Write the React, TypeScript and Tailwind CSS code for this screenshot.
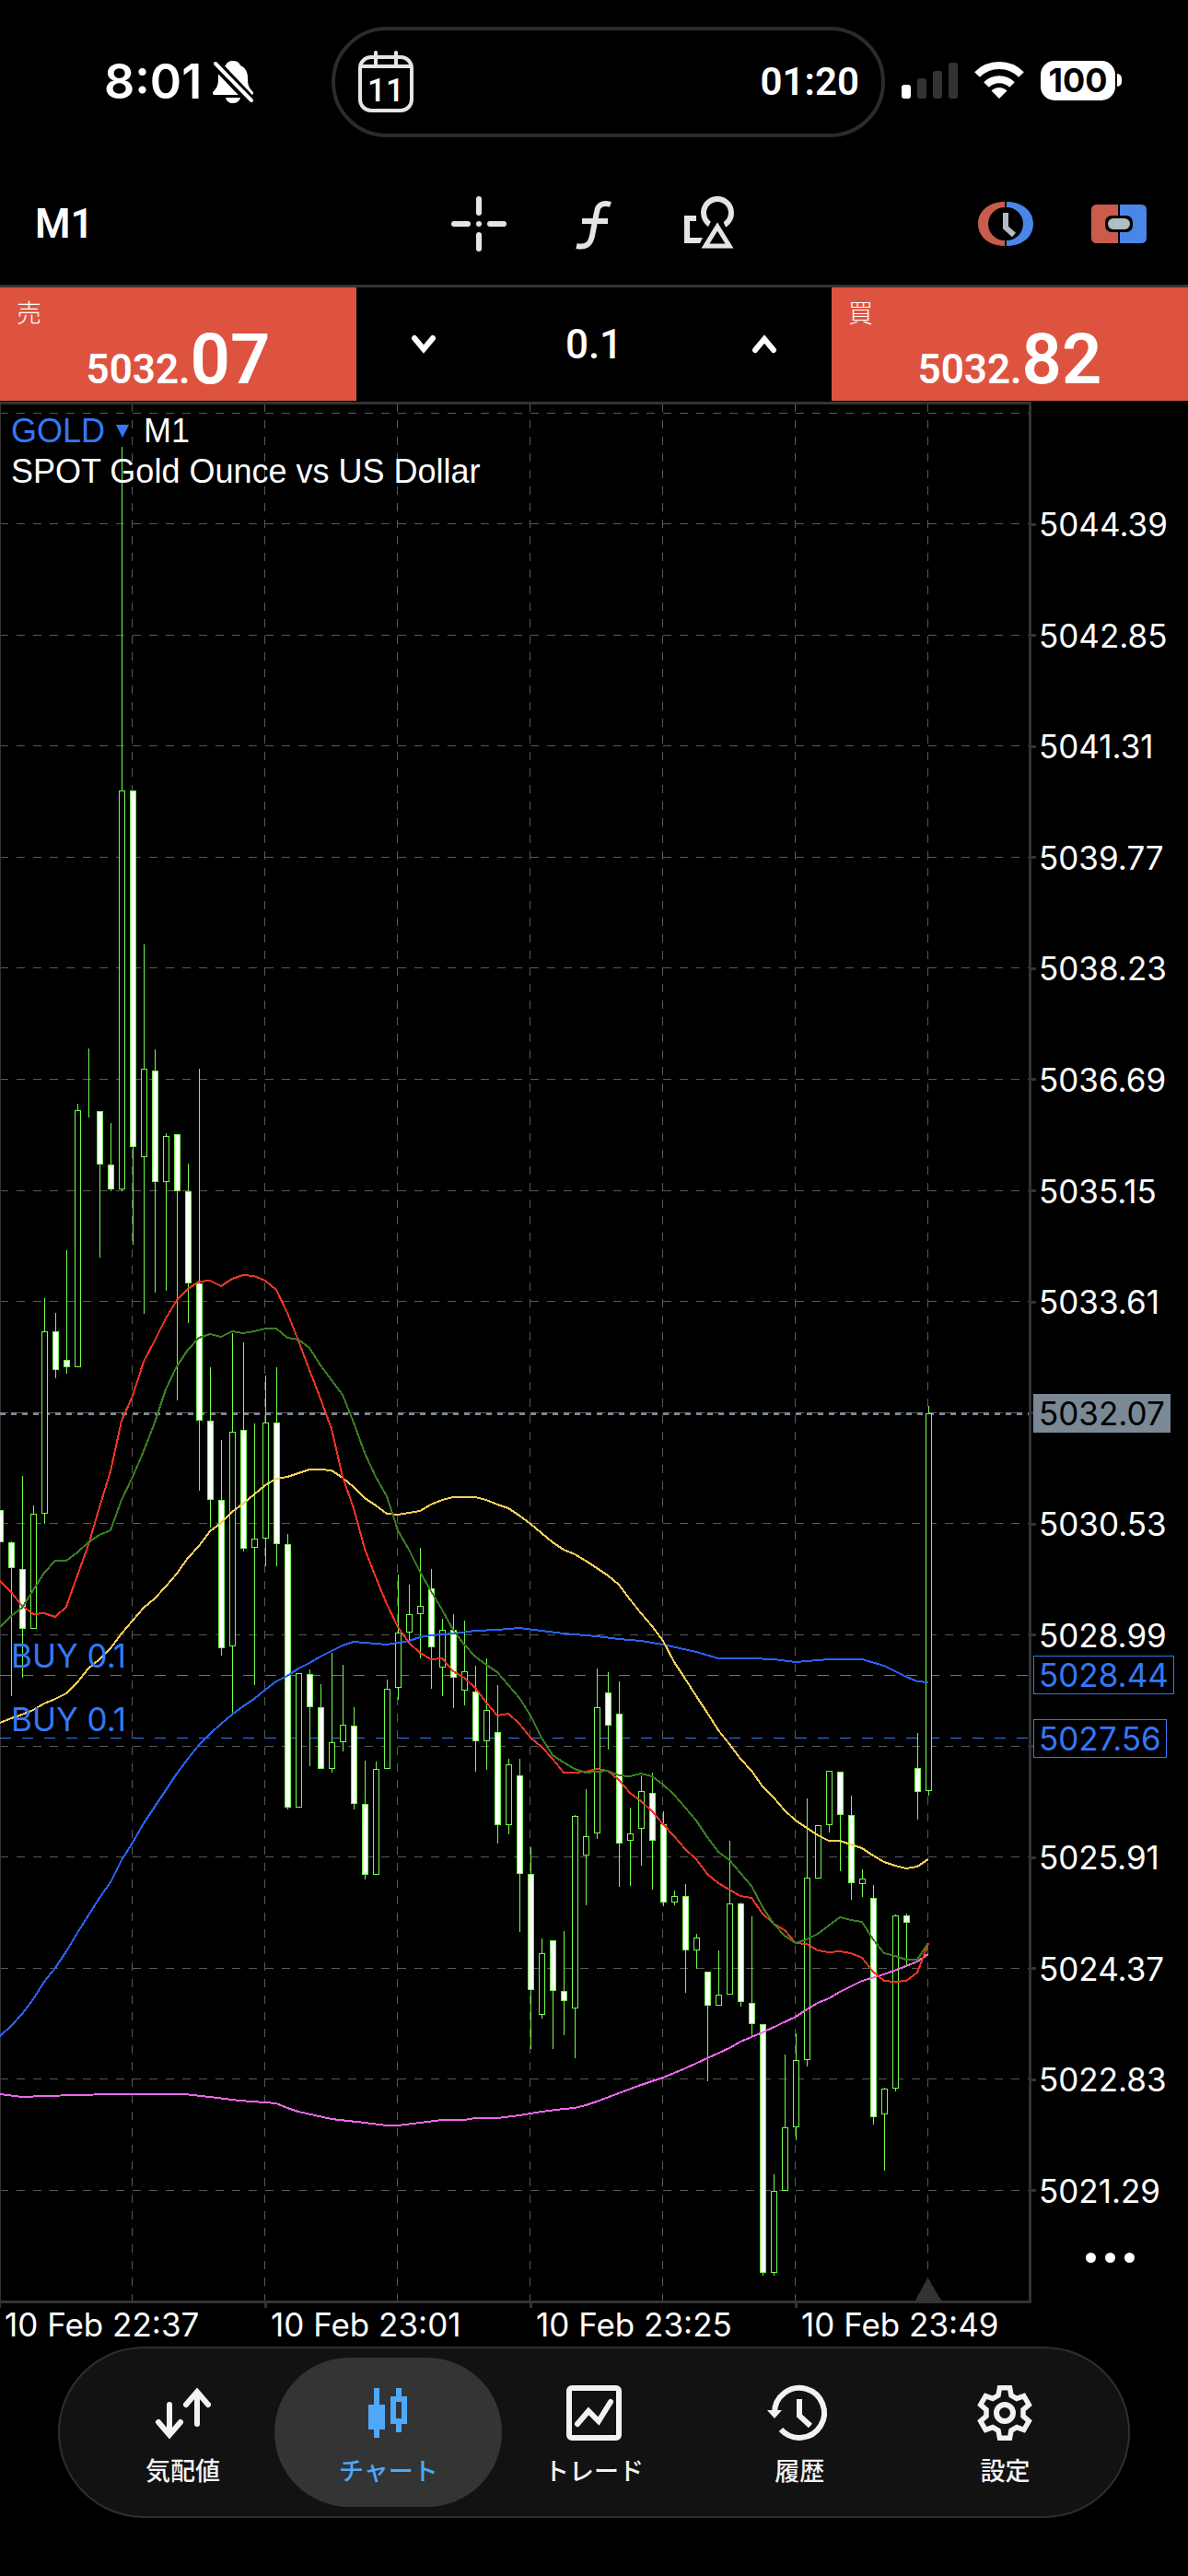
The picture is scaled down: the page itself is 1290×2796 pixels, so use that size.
import React from 'react';

// Chart space: x is 12 units per bar, y runs from TOP to TOP + HEIGHT
const TOP = 436;
const WIDTH = 1120;
const HEIGHT = 2064;

const priceToY = (price: number) => 569 + ((5044.39 - price) * 120.6) / 1.54;
const toPercent = (y: number) => `${((y - TOP) / HEIGHT) * 100}%`;

// [high, body top, body bottom, low, falling]
type Candle = [number, number, number, number, 0 | 1];

const CANDLES: Candle[] = [
  [1639, 1639, 1673, 1673, 1], [1673, 1674, 1701, 1840, 1], [1602, 1703, 1767, 1820, 1], [1634, 1643, 1767, 1767, 0],
  [1409, 1445, 1642, 1653, 0], [1425, 1445, 1486, 1495, 1], [1357, 1476, 1483, 1490, 1], [1198, 1205, 1483, 1483, 0],
  [1138, 1205, 1205, 1212, 0], [1206, 1206, 1263, 1364, 1], [1219, 1264, 1290, 1292, 1], [485, 858, 1290, 1292, 0],
  [858, 858, 1244, 1350, 1], [1025, 1160, 1255, 1425, 0], [1139, 1162, 1282, 1402, 1], [1230, 1233, 1282, 1400, 0],
  [1231, 1231, 1292, 1519, 1], [1263, 1293, 1392, 1435, 1], [1160, 1393, 1541, 1617, 1], [1484, 1542, 1627, 1657, 1],
  [1563, 1628, 1788, 1796, 1], [1447, 1554, 1786, 1858, 0], [1457, 1552, 1680, 1683, 1], [1545, 1670, 1679, 1828, 0],
  [1493, 1544, 1669, 1699, 0], [1484, 1544, 1675, 1699, 1], [1665, 1676, 1961, 1963, 1], [1816, 1816, 1961, 1961, 0],
  [1812, 1817, 1852, 1916, 1], [1828, 1853, 1919, 1919, 1], [1794, 1891, 1919, 1923, 0], [1807, 1872, 1890, 1900, 0],
  [1853, 1873, 1957, 1963, 1], [1911, 1958, 2034, 2039, 1], [1912, 1920, 2034, 2034, 0], [1823, 1833, 1919, 1919, 0],
  [1709, 1772, 1831, 1844, 0], [1720, 1752, 1771, 1779, 0], [1680, 1743, 1751, 1799, 0], [1703, 1724, 1787, 1832, 1],
  [1757, 1769, 1809, 1840, 0], [1752, 1769, 1820, 1853, 1], [1759, 1814, 1834, 1850, 0], [1808, 1836, 1889, 1922, 1],
  [1800, 1856, 1889, 1920, 0], [1829, 1880, 1980, 2000, 1], [1909, 1915, 1980, 1990, 0], [1909, 1927, 2033, 2096, 1],
  [2005, 2034, 2159, 2223, 1], [2104, 2120, 2186, 2190, 0], [2106, 2106, 2160, 2223, 1], [2096, 2161, 2171, 2208, 1],
  [1970, 1971, 2179, 2233, 0], [1942, 1993, 2013, 2067, 0], [1811, 1853, 1989, 1995, 0], [1815, 1837, 1872, 1898, 1],
  [1825, 1860, 2000, 2047, 1], [1962, 1990, 1997, 2046, 0], [1927, 1944, 1984, 2024, 0], [1924, 1946, 1997, 2050, 1],
  [1966, 1980, 2064, 2068, 1], [2052, 2058, 2064, 2067, 0], [2045, 2058, 2116, 2162, 1], [2099, 2103, 2116, 2136, 0],
  [2140, 2140, 2176, 2258, 1], [2117, 2165, 2176, 2176, 0], [1998, 2066, 2164, 2164, 0], [2065, 2066, 2172, 2177, 1],
  [2080, 2174, 2196, 2209, 1], [2197, 2197, 2466, 2469, 1], [2360, 2378, 2466, 2469, 0], [2230, 2309, 2377, 2377, 0],
  [2207, 2236, 2308, 2322, 0], [1952, 2038, 2235, 2242, 0], [1981, 1981, 2038, 2038, 0], [1922, 1922, 1980, 1988, 0],
  [1923, 1923, 1969, 2030, 1], [1949, 1970, 2043, 2061, 1], [2029, 2039, 2044, 2058, 0], [2046, 2060, 2297, 2305, 1],
  [2266, 2267, 2294, 2355, 0], [2078, 2079, 2266, 2269, 0], [2077, 2079, 2086, 2133, 1], [1881, 1919, 1944, 1974, 1],
  [1526, 1534, 1943, 1948, 0],
];

// One value per bar
const FAST_MA = [
  1716, 1728, 1743, 1752, 1751, 1755, 1744, 1710, 1677, 1636, 1597, 1542, 1515, 1478, 1455, 1431, 1411, 1399, 1391, 1390,
  1396, 1388, 1384, 1385, 1390, 1400, 1425, 1455, 1487, 1518, 1551, 1603, 1637, 1681, 1712, 1741, 1766, 1783, 1794, 1801,
  1800, 1814, 1821, 1832, 1848, 1862, 1860, 1871, 1886, 1896, 1909, 1924, 1924, 1923, 1920, 1922, 1932, 1946, 1955, 1966,
  1980, 1993, 2007, 2018, 2034, 2044, 2051, 2058, 2060, 2077, 2088, 2095, 2109, 2110, 2117, 2119, 2118, 2120, 2125, 2140,
  2150, 2151, 2150, 2141, 2110,
];

const MID_MA = [
  1766, 1754, 1745, 1726, 1707, 1694, 1694, 1685, 1674, 1666, 1661, 1628, 1603, 1575, 1544, 1508, 1483, 1465, 1452, 1448,
  1451, 1445, 1447, 1445, 1442, 1442, 1452, 1454, 1463, 1482, 1498, 1514, 1544, 1577, 1603, 1624, 1661, 1682, 1706, 1727,
  1747, 1769, 1785, 1798, 1807, 1815, 1829, 1843, 1862, 1886, 1905, 1913, 1920, 1924, 1923, 1922, 1927, 1928, 1925, 1928,
  1937, 1948, 1962, 1976, 1994, 2010, 2019, 2033, 2047, 2070, 2088, 2101, 2109, 2105, 2099, 2090, 2081, 2084, 2086, 2105,
  2120, 2123, 2127, 2127, 2109,
];

const SLOW_MA = [
  1870, 1865, 1861, 1856, 1849, 1844, 1838, 1826, 1811, 1801, 1789, 1773, 1759, 1745, 1735, 1722, 1708, 1691, 1678, 1662,
  1653, 1641, 1632, 1622, 1612, 1605, 1603, 1599, 1595, 1595, 1596, 1604, 1614, 1626, 1634, 1643, 1644, 1642, 1640, 1633,
  1628, 1625, 1625, 1625, 1628, 1633, 1637, 1645, 1654, 1664, 1674, 1682, 1687, 1694, 1702, 1710, 1720, 1736, 1751, 1765,
  1781, 1804, 1822, 1841, 1859, 1878, 1893, 1909, 1922, 1939, 1951, 1965, 1976, 1984, 1992, 1998, 1998, 2002, 2006, 2014,
  2021, 2025, 2028, 2026, 2018,
];

const barsToPoints = (values: number[]) => values.map((y, i) => `${i * 12},${y}`).join(' ');

// The two longest averages hardly bend, so they are kept as plain points
const BLUE_POINTS =
  '0,2210 12,2199 24,2186 36,2170 48,2151 60,2136 72,2118 84,2098 96,2079 108,2060 120,2043 132,2019 144,2000 156,1979 168,1961 180,1943 192,1925 204,1909 216,1894 228,1882 240,1871 252,1861 264,1852 276,1844 288,1834 300,1825 312,1819 324,1811 336,1805 348,1798 360,1792 372,1786 384,1782 408,1784 420,1785 444,1781 456,1777 468,1775 492,1773 516,1770 540,1769 564,1767 588,1770 612,1773 648,1776 672,1779 696,1781 720,1785 756,1793 780,1800 816,1800 840,1801 864,1804 900,1801 936,1801 960,1808 984,1820 996,1825 1008,1826';
const PINK_POINTS =
  '0,2273 24,2276 48,2275 120,2273 200,2273 228,2276 260,2280 288,2282 300,2283 312,2288 324,2292 360,2300 396,2304 420,2307 432,2307 456,2304 480,2301 504,2301 516,2299 540,2299 564,2296 588,2292 612,2289 624,2288 636,2285 648,2281 672,2272 696,2263 720,2255 744,2245 768,2234 792,2223 804,2216 828,2206 864,2189 876,2181 888,2174 900,2169 912,2162 936,2150 960,2143 984,2134 996,2129 1008,2121';

const GRID_X = [143, 287, 431, 575, 719, 863, 1007];
const GRID_Y = [449, 569, 690, 810, 931, 1051, 1172, 1293, 1413, 1534, 1654, 1775, 1896, 2016, 2137, 2257, 2378];

// null keeps the row free where a price tag sits
const PRICES = [
  '5044.39', '5042.85', '5041.31', '5039.77', '5038.23', '5036.69', '5035.15', '5033.61',
  null, '5030.53', '5028.99', null, '5025.91', '5024.37', '5022.83', '5021.29',
];

const TIMES = ['10 Feb 22:37', '10 Feb 23:01', '10 Feb 23:25', '10 Feb 23:49'];

const POSITIONS = [
  { label: 'BUY 0.1', price: 5028.44 },
  { label: 'BUY 0.1', price: 5027.56 },
];

const BID = 5032.07;

const StatusBar = () => (
  <header className="flex h-[178px] items-center">
    <div className="flex w-[360px] items-center gap-3 pl-[113px]">
      <span className="text-[52px] leading-none font-semibold">8:01</span>
      <svg width="44" height="48" viewBox="0 0 44 48" fill="white" aria-hidden="true">
        <path d="M22 1c-4 0-7 2-8 5-5 2-8 7-8 13 0 8-1 11-5 15-2 2-1 4 2 4h38c3 0 4-2 2-4-4-4-5-7-5-15 0-6-3-11-8-13-1-3-4-5-8-5Z" />
        <path d="M14 41h16c-1 4-4 6-8 6s-7-2-8-6Z" />
        <path d="M2 3 42 45" stroke="black" strokeWidth="11" />
        <path d="M3 4 42 44" stroke="white" strokeWidth="4" strokeLinecap="round" />
      </svg>
    </div>
    <div className="flex h-[120px] flex-1 items-center justify-between rounded-full border-4 border-[#2b2b2b] pr-6 pl-6">
      <svg width="62" height="68" viewBox="0 0 62 68" fill="none" stroke="#e5e5e5" strokeWidth="4" aria-hidden="true">
        <rect x="3" y="7" width="56" height="58" rx="12" />
        <path d="M4 17h54M20 2v15M42 2v15" strokeLinecap="round" />
        <text x="31" y="55" textAnchor="middle" fill="white" stroke="none" fontSize="35" fontFamily="Roboto, sans-serif" fontWeight="500">11</text>
      </svg>
      <span className="font-['Roboto',sans-serif] text-[42px] leading-none font-semibold">01:20</span>
    </div>
    <div className="flex w-[329px] items-center gap-[18px] pb-1 pl-[18px]">
      <svg width="61" height="40" viewBox="0 0 61 40" aria-hidden="true">
        <rect y="25" width="10" height="15" rx="3" fill="white" />
        <rect x="17" y="18" width="10" height="22" rx="3" fill="#333" />
        <rect x="34" y="10" width="10" height="30" rx="3" fill="#333" />
        <rect x="51" y="1" width="10" height="39" rx="3" fill="#333" />
      </svg>
      <svg width="54" height="40" viewBox="0 0 54 40" fill="none" stroke="white" strokeWidth="8" aria-hidden="true">
        <path d="M3 14a34 34 0 0 1 48 0" />
        <path d="M13 25a20 20 0 0 1 28 0" />
        <path d="M27 40 18.500 31.500a12 12 0 0 1 17 0Z" fill="white" stroke="none" />
      </svg>
      <div className="flex items-center gap-[2px]">
        <span className="flex h-[43px] w-[81px] items-center justify-center rounded-[15px] bg-white text-[36px] leading-none font-bold text-black">100</span>
        <span className="h-[14px] w-[5px] rounded-r-full bg-white" />
      </div>
    </div>
  </header>
);

const Toolbar = () => (
  <div className="grid h-[134px] grid-cols-3 items-center border-b-[3px] border-[#333] pb-[2px] text-[#e5e5e5]">
    <button className="justify-self-start pl-[38px] font-['Roboto',sans-serif] text-[44px] leading-none font-semibold text-white">M1</button>
    <div className="flex items-center justify-center gap-[65px]">
      <button aria-label="Crosshair">
        <svg width="60" height="60" viewBox="0 0 60 60" stroke="currentColor" strokeWidth="6" strokeLinecap="round">
          <path d="M3 30h15M42 30h15M30 3v15M30 42v15M30 30h0" />
        </svg>
      </button>
      <button aria-label="Indicators">
        <svg width="60" height="60" viewBox="0 0 60 60" fill="none" stroke="currentColor" strokeWidth="6">
          <path d="M48 9C39 6 34 10 33 17L28 43C26 53 20 56 11 54M17 27H45" />
        </svg>
      </button>
      <button aria-label="Objects">
        <svg width="60" height="60" viewBox="0 0 60 60" fill="none" stroke="currentColor" strokeWidth="6">
          <path d="M16 24H6v24h17" />
          <circle cx="39" cy="18" r="15" />
          <path d="M39 22 54 60H20Z" fill="black" stroke="black" strokeWidth="8" />
          <path d="M39 33 52 54H26Z" strokeWidth="5" />
        </svg>
      </button>
    </div>
    <div className="flex items-center justify-end gap-[63px] pr-[45px]">
      <button aria-label="Pending order">
        <svg width="60" height="60" viewBox="0 0 60 60">
          <path d="M29 6C12 6 0 16 0 30s12 24 29 24v-6a18 18 0 0 1 0-36Z" fill="#c95c4a" />
          <path d="M31 6c17 0 29 10 29 24S48 54 31 54v-6a18 18 0 0 0 0-36Z" fill="#4a86e8" />
          <path d="M30 18v16l9 8" fill="none" stroke="#b0bec5" strokeWidth="6" />
        </svg>
      </button>
      <button aria-label="One click trading">
        <svg width="60" height="60" viewBox="0 0 60 60">
          <path d="M29 9H6q-6 0-6 6v30q0 6 6 6h23Z" fill="#c95c4a" />
          <path d="M31 9h23q6 0 6 6v30q0 6-6 6H31Z" fill="#4a86e8" />
          <rect x="15" y="21" width="30" height="18" rx="7" fill="black" />
          <rect x="18" y="24" width="24" height="12" rx="6" fill="#b0bec5" />
        </svg>
      </button>
    </div>
  </div>
);

const PriceButton = ({ label, whole, pips }: { label: string; whole: string; pips: string }) => (
  <button className="relative h-full w-[30%] bg-[#de5340] font-['Roboto',sans-serif] font-semibold">
    <span className="absolute top-3 left-[18px] font-['Noto_Sans_CJK_JP',sans-serif] text-[27px] leading-[30px] font-light">{label}</span>
    <span className="flex items-baseline justify-center pt-8 leading-none">
      <span className="text-[44px] leading-none">{whole}</span>
      <span className="text-[76px] leading-none">{pips}</span>
    </span>
  </button>
);

const TradePanel = () => (
  <div className="flex h-[124px] pb-px">
    <PriceButton label="売" whole="5032." pips="07" />
    <div className="flex flex-1 items-center justify-between px-[58px]">
      <button aria-label="Decrease volume">
        <svg width="30" height="24" viewBox="0 0 30 24" fill="none" stroke="white" strokeWidth="6" strokeLinecap="round">
          <path d="m5 5 10 12L25 5" />
        </svg>
      </button>
      <input
        aria-label="Volume"
        defaultValue="0.1"
        className="w-40 bg-transparent text-center font-['Roboto',sans-serif] text-[44px] leading-none font-medium outline-none"
      />
      <button aria-label="Increase volume">
        <svg width="30" height="24" viewBox="0 0 30 24" fill="none" stroke="white" strokeWidth="6" strokeLinecap="round">
          <path d="M5 18 15 6l10 12" />
        </svg>
      </button>
    </div>
    <PriceButton label="買" whole="5032." pips="82" />
  </div>
);

const ChartCanvas = () => (
  <svg viewBox={`0 ${TOP} ${WIDTH} ${HEIGHT}`} className="block h-auto w-full" shapeRendering="crispEdges" fill="none">
    <g stroke="#595959" strokeDasharray="9 9">
      {GRID_Y.map((y) => (
        <line key={y} x1="0" x2="1117" y1={y - 0.5} y2={y - 0.5} />
      ))}
      {GRID_X.map((x) => (
        <line key={x} x1={x + 0.5} x2={x + 0.5} y1="438" y2="2497" />
      ))}
    </g>

    <path d="M994 2497 1007.500 2472 1022 2497Z" fill="#333" />
    <path d="M.5 438V2500" stroke="#333" />
    <path d="M0 437.500H1118.500V2498.500H0" stroke="#333" strokeWidth="3" />

    <line x1="0" x2="1117" y1={priceToY(BID) + 0.5} y2={priceToY(BID) + 0.5} stroke="#7b8896" strokeWidth="3" strokeDasharray="6 6" />
    {POSITIONS.map((p) => (
      <line key={p.price} x1="0" x2="1117" y1={priceToY(p.price)} y2={priceToY(p.price)} stroke="#3478f6" strokeDasharray="12 12" />
    ))}

    <g stroke="#75fb4c">
      {CANDLES.map(([high, top, bottom, low, falling], i) => (
        <g key={i}>
          <line x1={i * 12 + 0.5} x2={i * 12 + 0.5} y1={high} y2={low + 1} />
          <rect x={i * 12 - 2.5} y={top + 0.5} width="6" height={bottom - top} fill={falling ? '#fff' : '#000'} />
        </g>
      ))}
    </g>

    <g strokeWidth="2">
      <polyline points={PINK_POINTS} stroke="#ee66ee" />
      <polyline points={BLUE_POINTS} stroke="#2962ff" />
      <polyline points={barsToPoints(SLOW_MA)} stroke="#f7cf5b" />
      <polyline points={barsToPoints(FAST_MA)} stroke="#ee3524" />
      <polyline points={barsToPoints(MID_MA)} stroke="#3b7d23" />
    </g>
  </svg>
);

const PriceAxis = () => (
  <div className="relative flex w-[170px] flex-col pt-[115px] text-[35px] leading-9">
    <ul className="flex flex-1 flex-col justify-between">
      {PRICES.map((price, i) => (
        <li key={i} className="flex h-9 items-center gap-[3px]">
          <span className="h-[3px] w-[5px] bg-[#333]" />
          {price}
        </li>
      ))}
    </ul>
    <span
      className="absolute left-[2px] -translate-y-1/2 bg-[#7b8896] px-[6px] py-[3px] text-black"
      style={{ top: toPercent(priceToY(BID)) }}
    >
      {BID.toFixed(2)}
    </span>
    {POSITIONS.map((p) => (
      <span
        key={p.price}
        className="absolute left-[2px] -translate-y-1/2 border border-[#3478f6] bg-black px-[5px] py-[2px] text-[#3478f6]"
        style={{ top: toPercent(priceToY(p.price)) }}
      >
        {p.price.toFixed(2)}
      </span>
    ))}
    <button aria-label="More" className="flex h-[104px] items-center justify-center gap-[10px] pt-1">
      <span className="size-[11px] rounded-full bg-white" />
      <span className="size-[11px] rounded-full bg-white" />
      <span className="size-[11px] rounded-full bg-white" />
    </button>
  </div>
);

const TimeAxis = () => (
  <ul className="flex h-[47px] text-[35px] leading-[46px]">
    {TIMES.map((time, i) => (
      <li key={time} className="flex w-[288px] shrink-0 items-start">
        <span className={i === 0 ? 'h-[5px] w-px bg-[#333]' : 'h-[5px] w-[3px] -ml-px bg-[#333]'} />
        <span className="pl-1">{time}</span>
      </li>
    ))}
  </ul>
);

const Chart = () => (
  <main>
    <div className="flex">
      <div className="relative min-w-0 flex-1">
        <ChartCanvas />
        <div className="absolute top-[10px] left-3 font-['Liberation_Sans',Arial,sans-serif] text-[36px] leading-[44px]">
          <button className="flex items-center text-[#3478f6]">
            GOLD
            <svg width="14" height="14" viewBox="0 0 14 14" className="mr-4 ml-3" fill="currentColor">
              <path d="M0 0h14L7 14Z" />
            </svg>
            <span className="text-white">M1</span>
          </button>
          <p>SPOT Gold Ounce vs US Dollar</p>
        </div>
        {POSITIONS.map((p) => (
          <span
            key={p.price}
            className="absolute left-3 -translate-y-full text-[35px] leading-[42px] text-[#3478f6]"
            style={{ top: toPercent(priceToY(p.price)) }}
          >
            {p.label}
          </span>
        ))}
      </div>
      <PriceAxis />
    </div>
    <TimeAxis />
  </main>
);

const TABS = [
  {
    label: '気配値',
    icon: <path d="M15 21v32M3 40l12 14 12-14M45 42V8M33 21 45 7l12 14" stroke="currentColor" strokeWidth="6" strokeLinecap="round" />,
  },
  {
    label: 'チャート',
    active: true,
    icon: (
      <path
        d="M14 3h6v18h6v27h-6v9h-6v-9H8V21h6ZM38 3h6v9h6v30h-6v9h-6v-9h-6V12h6Zm0 15v18h6V18Z"
        fill="currentColor"
        fillRule="evenodd"
      />
    ),
  },
  {
    label: 'トレード',
    icon: (
      <g stroke="currentColor" strokeWidth="6">
        <rect x="3" y="3" width="54" height="54" rx="3" />
        <path d="m12 42 12-14 11 11 13-21" strokeLinecap="round" />
      </g>
    ),
  },
  {
    label: '履歴',
    icon: (
      <>
        <path d="M3 30a27 27 0 1 1 7 18M30 15v18l12 11" stroke="currentColor" strokeWidth="6" />
        <path d="M-5 27h16l-8 9Z" fill="currentColor" />
      </>
    ),
  },
  {
    label: '設定',
    icon: (
      <g stroke="currentColor">
        <path
          d="M24.500 2.800h11L37 11l6 3.400 7.800-2.800 5.500 9.600-6.300 5.400v6.800l6.300 5.400-5.500 9.600-7.800-2.800-6 3.400-1.500 8.200h-11L23 49l-6-3.400-7.800 2.800-5.500-9.600 6.300-5.400v-6.800l-6.300-5.400 5.500-9.600 7.800 2.800 6-3.400Z"
          strokeWidth="5.500"
        />
        <circle cx="30" cy="30" r="9" strokeWidth="6" />
      </g>
    ),
  },
];

const TabBar = () => (
  <div className="px-[63px] pb-[63px]">
    <nav className="flex h-[186px] items-stretch rounded-full border-2 border-[#2e2e2e] bg-[#121212] px-[22px] py-[10px]">
      {TABS.map((tab) => (
        <button
          key={tab.label}
          className={
            tab.active
              ? 'relative -mx-3 flex flex-[247] flex-col items-center rounded-full bg-[#343434] pt-[30px] text-[#4fa8f8]'
              : 'flex flex-[223] flex-col items-center pt-[30px] text-[#f2f2f2]'
          }
        >
          <svg width="60" height="60" viewBox="0 0 60 60" fill="none" className="overflow-visible">
            {tab.icon}
          </svg>
          <span className="pt-[14px] text-[27px] leading-10 font-medium">{tab.label}</span>
        </button>
      ))}
    </nav>
  </div>
);

export default function App() {
  return (
    <div className="min-h-screen bg-black font-['Inter','Noto_Sans_CJK_JP',sans-serif] text-white">
      <StatusBar />
      <Toolbar />
      <TradePanel />
      <Chart />
      <TabBar />
    </div>
  );
}
